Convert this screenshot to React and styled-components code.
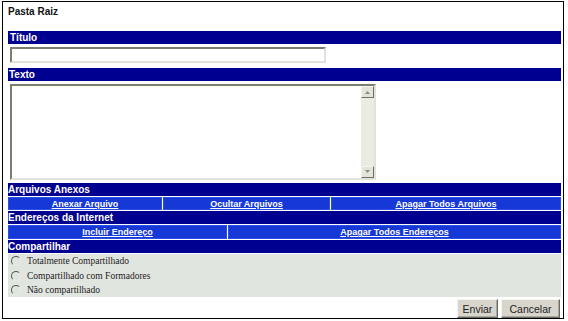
import React from "react";
import styled, { createGlobalStyle } from "styled-components";

const Global = createGlobalStyle`
  html, body { margin: 0; padding: 0; background: #fff; }
  body { font-family: "Liberation Sans", Arial, sans-serif; }
`;

const Frame = styled.div`
  box-sizing: border-box;
  margin: 1px 0 0 2px;
  width: 562px;
  height: 318px;
  border: 1px solid #000;
  padding: 2px 2px 0 5px;
  display: flex;
  flex-direction: column;
`;

const PageTitle = styled.div`
  font: bold 10px/14px "Liberation Sans", Arial, sans-serif;
  color: #111;
  height: 14px;
  margin-top: 1px;
`;

const Bar = styled.div`
  background: #000090;
  color: #fff;
  font: bold 10px/13px "Liberation Sans", Arial, sans-serif;
  height: 13px;
  padding-left: ${(p) => p.$indent || 0}px;
  margin-top: ${(p) => p.$top || 0}px;
  white-space: nowrap;
`;

const TextInput = styled.input`
  box-sizing: border-box;
  display: block;
  margin: 3px 0 0 2px;
  width: 316px;
  height: 16px;
  border: 2px solid;
  border-color: #7a7e72 #e2e2dc #e2e2dc #7a7e72;
  background: #fff;
  padding: 0 2px;
  font: 11px "Liberation Sans", Arial, sans-serif;
  outline: none;
`;

const AreaBox = styled.div`
  box-sizing: border-box;
  margin: 3px 0 0 2px;
  width: 366px;
  height: 99px;
  border: 2px solid;
  border-color: #7a7e72 #e2e2dc #e2e2dc #7a7e72;
  display: flex;
  background: #fff;
`;

const Area = styled.textarea`
  flex: 1;
  border: none;
  outline: none;
  resize: none;
  overflow: hidden;
  background: #fff;
  padding: 1px 2px;
  margin: 0;
  font: 11px "Liberation Sans", Arial, sans-serif;
  border-top: 1px solid #fffbe8;
`;

const Scroll = styled.div`
  width: 13px;
  background: #ebebe4;
  display: flex;
  flex-direction: column;
  justify-content: space-between;
`;

const ScrollBtn = styled.div`
  box-sizing: border-box;
  width: 13px;
  height: 12px;
  background: #e4e3da;
  border: 1px solid;
  border-color: #f4f4f0 #6f6f68 #6f6f68 #f4f4f0;
  display: flex;
  align-items: center;
  justify-content: center;
`;

const LinkRow = styled.div`
  display: grid;
  grid-template-columns: ${(p) => p.$cols};
  column-gap: 1px;
  margin: 1px 0;
  height: 14px;
`;

const LinkCell = styled.div`
  background: #1538d6;
  box-shadow: inset 0 0 0 1px #2a4ee6;
  display: flex;
  align-items: center;
  justify-content: center;
`;

const Link = styled.a`
  color: #fff;
  font: bold 9px/12px "Liberation Sans", Arial, sans-serif;
  text-decoration: underline;
  cursor: pointer;
  white-space: nowrap;
`;

const ShareBox = styled.div`
  background: #e1e5df;
  height: 43px;
  margin-top: 1px;
  display: flex;
  flex-direction: column;
`;

const RadioRow = styled.label`
  display: flex;
  align-items: center;
  height: ${(p) => p.$h}px;
  font: 9.5px "Liberation Serif", "Times New Roman", serif;
  color: #222;
`;

const Radio = styled.input`
  appearance: none;
  box-sizing: border-box;
  width: 10px;
  height: 10px;
  margin: 0 6px 0 3px;
  border-radius: 50%;
  border: 1px solid;
  border-color: #555 #e8ece6 #e8ece6 #555;
  background: transparent;
`;

const Actions = styled.div`
  display: flex;
  justify-content: flex-end;
  gap: 3px;
  margin-top: 2px;
  padding-right: 1px;
`;

const Button = styled.button`
  box-sizing: border-box;
  height: 19px;
  width: ${(p) => p.$w}px;
  padding: 0;
  background: #d8d6cc;
  border: 1px solid;
  border-color: #f4f4f0 #6a6a64 #6a6a64 #f4f4f0;
  box-shadow: inset -1px -1px 0 #a8a8a0;
  font: 10.5px "Liberation Sans", Arial, sans-serif;
  color: #222;
`;

const Arrow = ({ up }) => (
  <svg width="5" height="3" viewBox="0 0 5 3">
    <path d={up ? "M0 3 L2.5 0 L5 3 Z" : "M0 0 L2.5 3 L5 0 Z"} fill="#8a8a80" />
  </svg>
);

export default function App() {
  return (
    <>
      <Global />
      <Frame>
        <PageTitle>Pasta Raiz</PageTitle>
        <Bar $top={12} $indent={2}>Título</Bar>
        <TextInput type="text" />
        <Bar $top={5} $indent={1}>Texto</Bar>
        <AreaBox>
          <Area />
          <Scroll>
            <ScrollBtn><Arrow up /></ScrollBtn>
            <ScrollBtn><Arrow /></ScrollBtn>
          </Scroll>
        </AreaBox>
        <Bar $top={3}>Arquivos Anexos</Bar>
        <LinkRow $cols="154px 167px 1fr">
          <LinkCell><Link>Anexar Arquivo</Link></LinkCell>
          <LinkCell><Link>Ocultar Arquivos</Link></LinkCell>
          <LinkCell><Link>Apagar Todos Arquivos</Link></LinkCell>
        </LinkRow>
        <Bar>Endereços da Internet</Bar>
        <LinkRow $cols="219px 1fr">
          <LinkCell><Link>Incluir Endereço</Link></LinkCell>
          <LinkCell><Link>Apagar Todos Endereços</Link></LinkCell>
        </LinkRow>
        <Bar>Compartilhar</Bar>
        <ShareBox>
          <RadioRow $h={14}><Radio type="radio" name="c" />Totalmente Compartilhado</RadioRow>
          <RadioRow $h={15}><Radio type="radio" name="c" />Compartilhado com Formadores</RadioRow>
          <RadioRow $h={14}><Radio type="radio" name="c" />Não compartilhado</RadioRow>
        </ShareBox>
        <Actions>
          <Button $w={41}>Enviar</Button>
          <Button $w={59}>Cancelar</Button>
        </Actions>
      </Frame>
    </>
  );
}
